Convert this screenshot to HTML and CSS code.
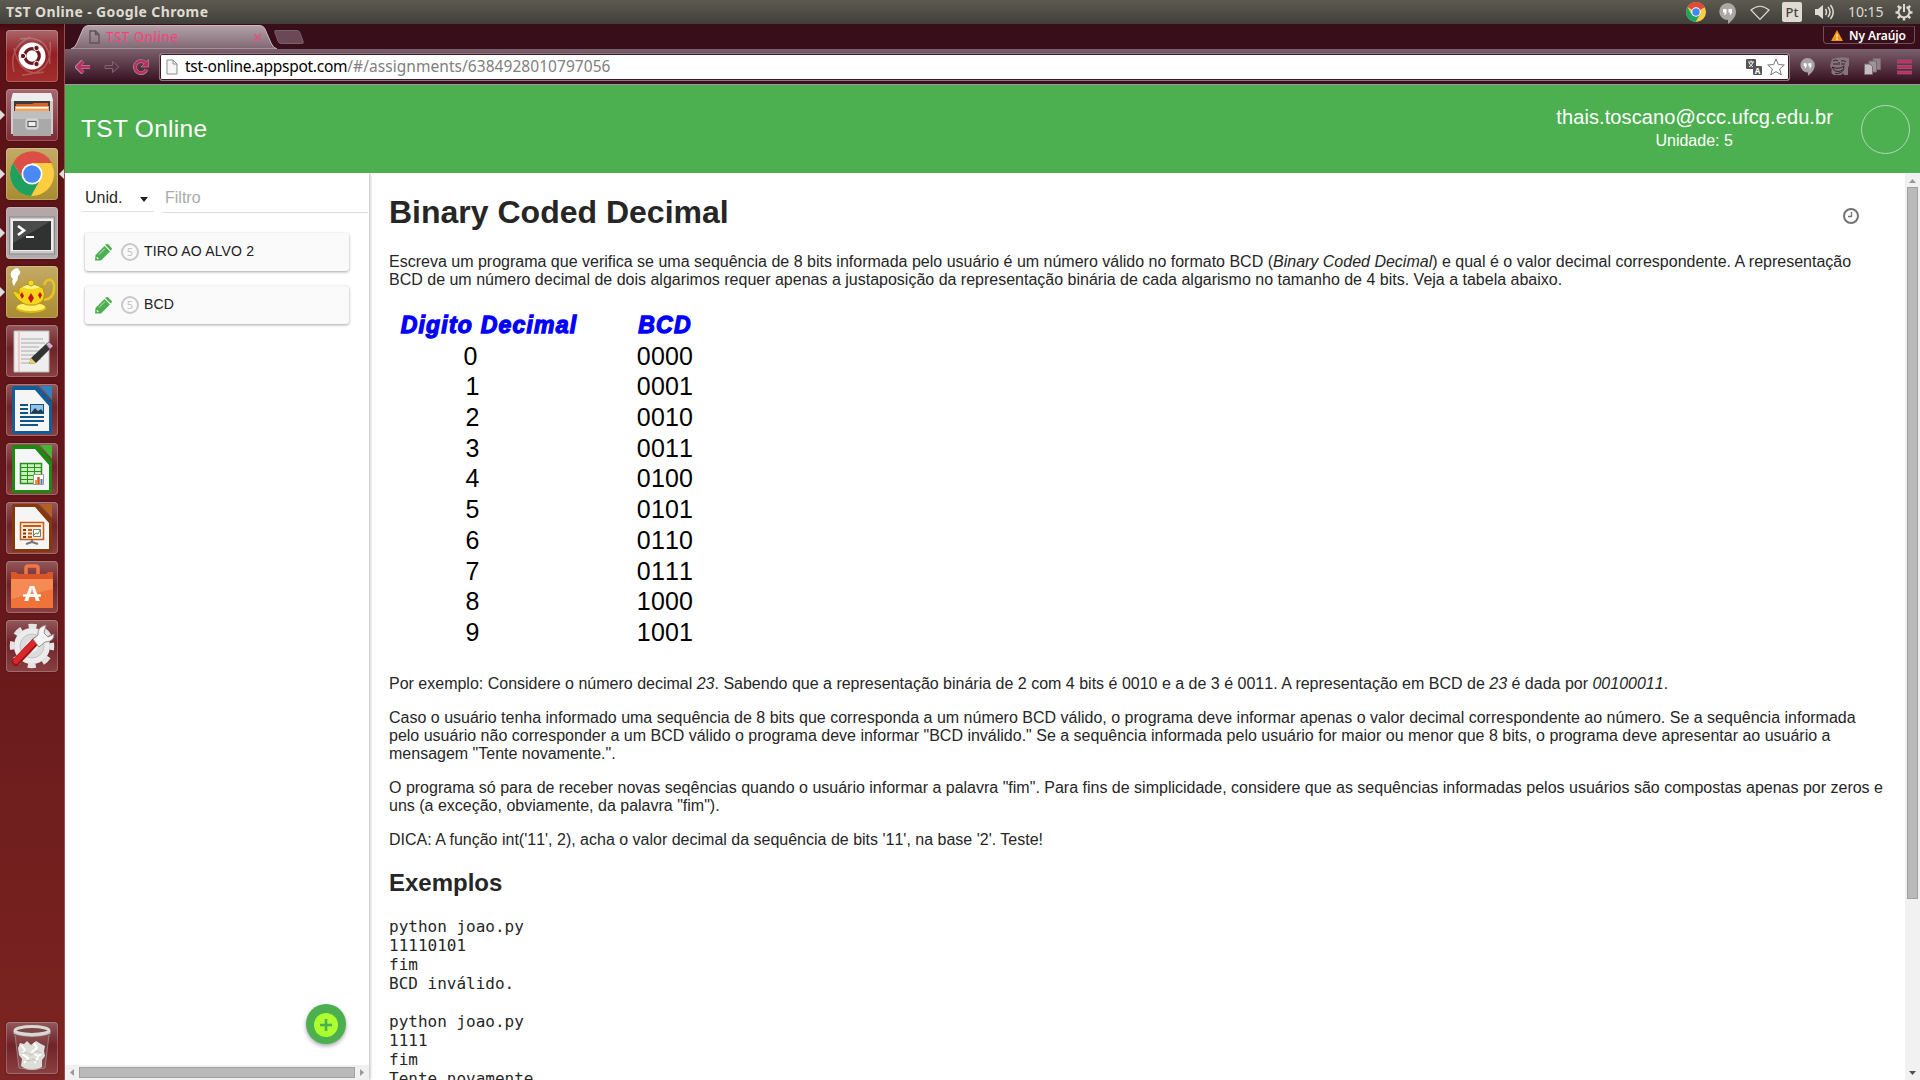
FILE: index.html
```html
<!DOCTYPE html>
<html lang="pt-BR">
<head>
<meta charset="utf-8">
<title>TST Online</title>
<link rel="stylesheet" href="styles.css">
</head>
<body>
<div class="panel">
  <span class="panel-title">TST Online - Google Chrome</span>
  <div class="indicators">
    <svg class="i-chrome" width="20" height="20" viewBox="0 0 40 40"><circle cx="20" cy="20" r="20" fill="#fc4"/><path d="M20 20 2.7 10A20 20 0 0 1 37.3 10z" fill="#de4b3c"/><path d="M20 10H37.3L20 20z" fill="#de4b3c"/><path d="M2.7 10A20 20 0 0 0 19 40L28 25 20 20 11 24z" fill="#1fa463"/><circle cx="20" cy="20" r="9.5" fill="#fff"/><circle cx="20" cy="20" r="7.5" fill="#4587f4"/></svg>
    <svg class="i-hang" width="17" height="21" viewBox="0 0 17 21"><path d="M8.500 0a8.500 8.500 0 0 1 8.500 8.500c0 6-5 10-8 12.500v-4A8.500 8.500 0 1 1 8.500 0z" fill="#aaa8a2"/><path d="M4 6h3.500v4L6 12H5l.8-2.500H4zM9.500 6H13v4l-1.500 2h-1l.8-2.500H9.500z" fill="#fff"/></svg>
    <svg class="i-wifi" width="20" height="16" viewBox="0 0 20 16"><path d="M1 5Q10-2.500 19 5L10 14.500z" fill="none" stroke="#dfdbd2" stroke-width="1.200"/></svg>
    <span class="i-lang">Pt</span>
    <svg class="i-vol" width="20" height="18" viewBox="0 0 20 18"><path d="M0 6h3l5-4v14l-5-4H0z" fill="#dfdbd2"/><path d="M10.500 6q2 3 0 6M13 4q4 5 0 10M15.500 2q5.500 7 0 14" fill="none" stroke="#dfdbd2" stroke-width="1.500"/></svg>
    <span class="i-time">10:15</span>
    <svg class="i-gear" width="18" height="18" viewBox="0 0 18 18" fill="none" stroke="#dfdbd2"><path d="M6.500 4a5.500 5.500 0 1 0 5 0" stroke-width="2"/><path d="M9 1v8" stroke-width="2"/><path d="M4.800 4.800 2.800 2.800M13.200 4.800l2-2M3 9.500H.5M15 9.500h2.500M4.800 13.200l-2 2M13.200 13.200l2 2M9 15v2.500" stroke-width="2.400"/></svg>
  </div>
</div>
<div class="desktop">
  <nav class="launcher">
    <div class="tile t-dash"><svg viewBox="0 0 52 52"><g fill="none" stroke="#fff" opacity=".22" stroke-width="1.500"><path d="M8 42Q2 18 24 7M14 9Q44 4 44 34M44 12Q48 44 16 45M8 18Q14 48 38 42"/></g><circle cx="26" cy="26" r="13.500" fill="#fff"/><circle cx="26" cy="26" r="7.300" fill="none" stroke="#6b1620" stroke-width="3.200"/><g fill="#6b1620" stroke="#fff"><circle cx="17" cy="26" r="2.700"/><circle cx="30.500" cy="18" r="2.700"/><circle cx="30.500" cy="34" r="2.700"/></g></svg></div>
    <div class="tile t-files run"><svg viewBox="0 0 52 52"><path d="M7 4h38l2 7v34H5V11z" fill="#cfcfcf"/><path d="M7 4h38l2 8H5z" fill="#ededed"/><path d="M8 12h36v10H8z" fill="#3b3b3b"/><path d="M10 15h16l2-1h14v8H10z" fill="#d9622b"/><path d="M9 17h34v5H9z" fill="#f3a35b"/><path d="M10 18h32v1.500H10z" fill="#fff"/><path d="M7 22h38v25H7z" fill="#a9a9a9"/><path d="M7 22h38v8H7z" fill="#bebebe"/><rect x="20" y="30" width="12" height="10" rx="2" fill="#c9c9c9" stroke="#ddd"/><rect x="22" y="32.500" width="8" height="5" fill="#eee" stroke="#555"/></svg></div>
    <div class="tile t-gold run focus"><svg viewBox="0 0 52 52"><circle cx="26" cy="26" r="22" fill="#ffcd40"/><path d="M26 15H46A22 22 0 0 0 7 15L17 31z" fill="#db4f47"/><path d="M7 15A22 22 0 0 0 25 48L34 32 26 35 17 31z" fill="#1fa05f"/><circle cx="26" cy="26" r="10.500" fill="#fff"/><circle cx="26" cy="26" r="8.800" fill="#4a89f3"/></svg></div>
    <div class="tile t-term run"><svg viewBox="0 0 52 52"><rect x="3.500" y="10" width="45" height="37" fill="#c9c9c9" stroke="#888"/><rect x="5" y="12" width="42" height="32" fill="#eee"/><rect x="7" y="14" width="38" height="29" fill="#303131"/><path d="M7 14h38L7 36z" fill="#4a4c4c"/><path d="m12 19 6 4.500-6 4.500" fill="none" stroke="#fff" stroke-width="2.600"/><path d="M20 30h8" stroke="#fff" stroke-width="2"/></svg></div>
    <div class="tile t-gold run"><svg viewBox="0 0 52 52"><path d="M8 20q-3-4-1-7-5-5 0-9 5-4 6 0 3 2-1 6 0 4-2 6z" fill="#fff"/><path d="M38 19q2-6 7-5 4 2 3 10-1 9-10 10" fill="none" stroke="#e9c41c" stroke-width="2.500"/><ellipse cx="25" cy="42" rx="15" ry="5" fill="#e0b90f"/><ellipse cx="25" cy="41" rx="14" ry="4" fill="#fff06a"/><path d="M13 22q12-7 24 0 5 14-8 17h-8q-9-3-15-14 5 0 7 3z" fill="#f4d51c" stroke="#bb9407"/><path d="M16 21q9-5 18 0-9 4-18 0z" fill="#fff387"/><circle cx="25" cy="17" r="3" fill="#f7dc2b" stroke="#c79d0b"/><g fill="#c3161c"><path d="m25 27 3 5-3 5-3-5zM16 26l2 4-2 3-2-4zM34 26l2 3-2 4-2-4z"/></g></svg></div>
    <div class="tile t-glass"><svg viewBox="0 0 52 52"><path d="M8 6h35v41H8z" fill="#eee" stroke="#bbb"/><path d="M13 5v42" stroke="#f2a2a2"/><path d="M15 14h22M15 18h24M15 22h18M15 26h22M15 30h14M15 34h20M15 38h10" stroke="#aaa"/><path d="m25 33 15-14 4 5-14 14-7 1z" fill="#333"/><path d="m25 33-2 6 7-1z" fill="#ead36b"/><path d="m40 19 3-2 4 4-3 3z" fill="#e6a3d5" stroke="#777"/></svg></div>
    <div class="tile t-glass"><svg viewBox="0 0 52 52"><path d="M8 2h24l14 16v30q0 2-2 2H8q-2 0-2-2V4q0-2 2-2z" fill="#135d96"/><path d="M34 2h12v14z" fill="#3083c0"/><path d="M9 6h20l14 16v25H9z" fill="#f5f5f5"/><path d="M14 21h8M14 25h8M14 29h8M14 33h24M14 37h24M14 41h18" stroke="#125687" stroke-width="1.800"/><rect x="24.500" y="20.500" width="13" height="9" fill="#8fc4e8" stroke="#125687"/><path d="m25 29 4-5 3 3 3-2 3 4z" fill="#26384a"/></svg></div>
    <div class="tile t-glass"><svg viewBox="0 0 52 52"><path d="M8 2h24l14 16v30q0 2-2 2H8q-2 0-2-2V4q0-2 2-2z" fill="#1c8a10"/><path d="M34 2h12v14z" fill="#45b534"/><path d="M9 6h20l14 16v25H9z" fill="#f5f5f5"/><path d="M14.500 20.500h21v20h-21z" fill="#c9f0bb" stroke="#2a8f1c" stroke-width="1.500"/><path d="M14.500 24.500h21M14.500 28.500h21M14.500 32.500h21M14.500 36.500h21M21.500 20.500v20M28.500 20.500v20" stroke="#2a8f1c"/><path d="M27.500 31.500h10v10h-10z" fill="#fff" stroke="#999"/><path d="M30 41v-4" stroke="#e3a02d" stroke-width="2"/><path d="M32.500 41v-7" stroke="#d9541e" stroke-width="2.500"/><path d="M35.500 41v-5" stroke="#3a83c4" stroke-width="2"/></svg></div>
    <div class="tile t-glass"><svg viewBox="0 0 52 52"><path d="M8 2h24l14 16v30q0 2-2 2H8q-2 0-2-2V4q0-2 2-2z" fill="#85380c"/><path d="M34 2h12v14z" fill="#b56024"/><path d="M9 5h20l14 16v26H9z" fill="#f5f5f5"/><rect x="14.500" y="20.500" width="23" height="17" fill="#fdebdd" stroke="#c65b17" stroke-width="1.500"/><path d="M17 24h18M22 28h4M22 31.500h4M22 35h4" stroke="#c65b17" stroke-width="2"/><path d="M17 28h3M17 31.500h3M17 35h3" stroke="#85380c" stroke-width="2"/><path d="M27.500 27.500h7v7h-7z" fill="#fff" stroke="#777"/><path d="m28 33 2-2 2 1 2-4" stroke="#3aa32a" fill="none"/><path d="M26 38v2l-6 2m6-2 6 2" stroke="#777" stroke-width="2" fill="none"/></svg></div>
    <div class="tile t-glass"><svg viewBox="0 0 52 52"><path d="M20 17V7q0-2 2-2h8q2 0 2 2v10" fill="none" stroke="#f07746" stroke-width="3.500"/><path d="M5 11h5l2 2h28l2-2h5v7H5z" fill="#d9562a"/><path d="M5 18h42v29H5z" fill="#f0743a"/><path d="M5 18h42v10L5 38z" fill="#f58a54"/><text x="26" y="40" text-anchor="middle" class="bag-letter">A</text><path d="M17 34.500h18" stroke="#fff" stroke-width="2.500"/></svg></div>
    <div class="tile t-glass"><svg viewBox="0 0 52 52"><circle cx="26" cy="26" r="20" fill="none" stroke="#e4e4e4" stroke-width="4.500" stroke-dasharray="8.200 7.508" stroke-dashoffset="4.100"/><circle cx="26" cy="26" r="18" fill="#ececec"/><circle cx="26" cy="26" r="12" fill="#dcdcdc" stroke="#c4c4c4"/><circle cx="26" cy="26" r="6" fill="#f4f4f4"/><path d="M10 42 30 21" stroke="#9e1214" stroke-width="8" stroke-linecap="round"/><path d="M10 41 29 21" stroke="#d9282b" stroke-width="5.500" stroke-linecap="round"/><path d="m27 19 5-4q-1-8 8-10l-2 8 4 4 6-3q0 8-9 8l-6 5z" fill="#f4f4f4" stroke="#8f8f8f"/></svg></div>
    <div class="tile t-glass t-trash"><svg viewBox="0 0 52 52"><path d="m9 13 4 33q13 4 26 0l4-33z" fill="#fff" opacity=".1"/><path d="m12 26 2-5 4 1 3-3 4 4 5-4 5 3 4 2-1 5 1 5-3 4v7l-4 2q-6 2-12 0l-5-3 1-7-3-4z" fill="#deded8"/><path d="m15 23 4 5-3 4 6 4-4 5m10-20 3 5-5 4 6 4 5-3m-5 4-3 6" fill="none" stroke="#fff" stroke-width="2"/><path d="m15 32 5-2 5 3 6-4 6 3M19 38l5 1 3-2 5 3" fill="none" stroke="#c2c1ba"/><path d="M9 13 13 46q13 3 26 0L43 13" fill="none" stroke="#aaa" stroke-width=".6"/><path d="M7.500 9v3q18.500 6 37 0V9" fill="#b2b2ae"/><ellipse cx="26" cy="8.500" rx="17" ry="4" fill="#7c4546" stroke="#d8d8d5" stroke-width="3"/></svg></div>
  </nav>
  <div class="window">
    <div class="tabstrip">
      <div class="tab">
        <svg class="tab-shape" width="206" height="24" viewBox="0 0 206 24"><defs><linearGradient id="tg" x1="0" y1="0" x2="0" y2="1"><stop offset="0" stop-color="#b3a1a8"/><stop offset="1" stop-color="#806872"/></linearGradient></defs><path d="M0 24q4-1 6-6L12 4q1-3 5-3.500H189q4 .5 5 3.500l6 14q2 5 6 6z" fill="url(#tg)" stroke="#c9b8bf"/></svg>
        <svg class="tab-doc" width="11" height="14" viewBox="0 0 11 14"><path d="M1 1h5.500L10 4.500V13H1zM6.500 1v3.500H10" fill="none" stroke="#5e5358" stroke-width="1.400"/></svg>
        <span class="tab-title">TST Online</span>
        <svg class="tab-close" width="9" height="9" viewBox="0 0 9 9"><path d="m1 1 7 7m0-7L1 8" stroke="#e0507f" stroke-width="1.500"/></svg>
      </div>
      <div class="newtab"></div>
      <div class="profile"><svg width="12" height="11" viewBox="0 0 12 11"><path d="m6 0 6 11H0z" fill="#f6960d"/><path d="M6 4v3.500M6 8.500V10" stroke="#fff" stroke-width="1.200"/></svg><span>Ny Araújo</span></div>
    </div>
    <div class="toolbar">
      <svg class="nav-i" width="16" height="14" viewBox="0 0 16 14"><path d="M8 1 2 7l6 6M2.500 7H15" fill="none" stroke="#a98f9a" stroke-width="4.200"/><path d="M8 1.500 2.500 7 8 12.500M3 7h12" fill="none" stroke="#bd2c62" stroke-width="2.600"/></svg>
      <svg class="nav-i" width="16" height="14" viewBox="0 0 16 14"><path d="M1 5.500h7.500V1.500L15 7l-6.500 5.500v-4H1z" fill="#5a3546" stroke="#846372"/></svg>
      <svg class="nav-i" width="16" height="16" viewBox="0 0 16 16"><path d="M13.500 10.500A6 6 0 1 1 12 3.700" fill="none" stroke="#a98f9a" stroke-width="3.800"/><path d="M15.500.5v7.500H8z" fill="#bd2c62" stroke="#a98f9a" stroke-width=".7"/><path d="M13.500 10.500A6 6 0 1 1 12.500 4" fill="none" stroke="#bd2c62" stroke-width="2.500"/></svg>
      <div class="omnibox">
        <svg width="12" height="16" viewBox="0 0 12 16"><path d="M1 1h6l4 4v10H1zM7 1v4h4" fill="#f6f6f6" stroke="#8c8c8c"/></svg>
        <span class="url"><span class="host">tst-online.appspot.com</span><span class="path">/#/assignments/6384928010797056</span></span>
        <svg class="tr" width="16" height="16" viewBox="0 0 16 16"><rect width="10" height="10" rx="1" fill="#555"/><path d="M2 3h6M5 1.500V3M3 8q3-1 4-5M3 3.500q1 3 4 4.500" fill="none" stroke="#fff" stroke-width=".9"/><rect x="7" y="7" width="9" height="9" rx="1" fill="#555"/><text x="11.500" y="14.500" text-anchor="middle" class="tr-letter">A</text></svg>
        <svg class="star" width="18" height="18" viewBox="0 0 18 18"><path d="m9 1 2.300 5.500 6 .5-4.600 3.900 1.500 6L9 13.600 3.800 16.900l1.500-6L.7 7l6-.5z" fill="#fff" stroke="#777"/></svg>
      </div>
      <div class="exts">
        <svg width="15" height="18" viewBox="0 0 17 21"><path d="M8.500 0a8.500 8.500 0 0 1 8.500 8.500c0 6-5 10-8 12.500v-4A8.500 8.500 0 1 1 8.500 0z" fill="#aaa3a6"/><path d="M4 6h3.500v4L6 12H5l.8-2.500H4zM9.500 6H13v4l-1.500 2h-1l.8-2.500H9.500z" fill="#fff"/></svg>
        <svg width="19" height="19" viewBox="0 0 19 19"><path d="M2 2q8-3 17-1v8l-1 1v8h-4l-1-2-2 2H4q-4-2-2-5L0 9z" fill="#85747b"/><path d="M3 4q3-2 5 0m3 0q3-1 5 1M3 7h5M11 7h4M2 10q7 3 12-1 0 5-6 5.500-4 .5-6-4.500zM5 16.500q6 .5 9-4M9 5v3" fill="none" stroke="#3a1e28" stroke-width="1"/></svg>
        <svg width="17" height="17" viewBox="0 0 17 17" stroke="#776970"><path d="M9 .5h7.500v11H9z" fill="#8e8287"/><path d="M5 3h7.500v11H5z" fill="#9d9397"/><path d="M.5 6H6l2.500 2.500v8h-8z" fill="#c5bec1"/></svg>
        <svg width="15" height="16" viewBox="0 0 15 16"><path d="M0 2.500h15M0 8h15M0 13.500h15" stroke="#927683" stroke-width="3.600"/><path d="M0 2.500h15M0 8h15M0 13.500h15" stroke="#c42a63" stroke-width="2.400"/></svg>
      </div>
    </div>
    <header class="appbar">
      <span class="brand">TST Online</span>
      <div class="user"><span class="email">thais.toscano@ccc.ufcg.edu.br</span><span class="unit">Unidade: 5</span></div>
      <div class="avatar"></div>
    </header>
    <div class="content">
      <aside class="side">
        <div class="filters">
          <div class="select"><span>Unid.</span><i class="caret"></i></div>
          <div class="filter">Filtro</div>
        </div>
        <div class="cards">
          <div class="card"><svg width="17" height="17" viewBox="0 0 17 17"><path d="M0 16.500 .5 11 9.500 2l5.500 5.500L6 16.500z" fill="#4caf50"/><path d="m10.300 1.200 1-1q.8-.5 1.600 0L16.700 4q.5.800 0 1.500l-1 1z" fill="#4caf50"/><path d="M4 10.500 9.800 4.700" stroke="#fff" stroke-width=".7"/><path d="M1.800 13.400 3.300 14.900" stroke="#fff" stroke-width="1.300"/></svg><span class="badge">5</span><span class="name">TIRO AO ALVO 2</span></div>
          <div class="card"><svg width="17" height="17" viewBox="0 0 17 17"><path d="M0 16.500 .5 11 9.500 2l5.500 5.500L6 16.500z" fill="#4caf50"/><path d="m10.300 1.200 1-1q.8-.5 1.600 0L16.700 4q.5.800 0 1.500l-1 1z" fill="#4caf50"/><path d="M4 10.500 9.800 4.700" stroke="#fff" stroke-width=".7"/><path d="M1.800 13.400 3.300 14.900" stroke="#fff" stroke-width="1.300"/></svg><span class="badge">5</span><span class="name">BCD</span></div>
        </div>
        <div class="hbar"><svg width="14" height="15"><path d="M9 4v7L5 7.500z" fill="#999"/></svg><div class="hthumb"></div><svg width="14" height="15"><path d="M5 4v7l4-3.500z" fill="#999"/></svg></div>
        <div class="fab"><svg width="24" height="24" viewBox="0 0 24 24"><circle cx="12" cy="12" r="12" fill="#adff2f"/><path d="M12 6v12M6 12h12" stroke="#4caf50" stroke-width="2.600"/></svg></div>
      </aside>
      <main class="main">
        <div class="head"><h1>Binary Coded Decimal</h1><svg width="16" height="16" viewBox="0 0 16 16"><circle cx="8" cy="8" r="7" fill="none" stroke="#737373" stroke-width="2"/><path d="M8.500 4v4.500H5" fill="none" stroke="#737373" stroke-width="1.300"/></svg></div>
        <p>Escreva um programa que verifica se uma sequência de 8 bits informada pelo usuário é um número válido no formato BCD (<em>Binary Coded Decimal</em>) e qual é o valor decimal correspondente. A representação<br>BCD de um número decimal de dois algarimos requer apenas a justaposição da representação binária de cada algarismo no tamanho de 4 bits. Veja a tabela abaixo.</p>
        <div class="bcd">
          <b>Digito Decimal</b><b>BCD</b>
          <span class="zero">0</span><span>0000</span>
          <span>1</span><span>0001</span>
          <span>2</span><span>0010</span>
          <span>3</span><span>0011</span>
          <span>4</span><span>0100</span>
          <span>5</span><span>0101</span>
          <span>6</span><span>0110</span>
          <span>7</span><span>0111</span>
          <span>8</span><span>1000</span>
          <span>9</span><span>1001</span>
        </div>
        <p>Por exemplo: Considere o número decimal <em>23</em>. Sabendo que a representação binária de 2 com 4 bits é 0010 e a de 3 é <span class="bits">0011</span>. A representação em BCD de <em>23</em> é dada por <em class="bits">00100011</em>.</p>
        <p>Caso o usuário tenha informado uma sequência de 8 bits que corresponda a um número BCD válido, o programa deve informar apenas o valor decimal correspondente ao número. Se a sequência informada<br>pelo usuário não corresponder a um BCD válido o programa deve informar "BCD inválido." Se a sequência informada pelo usuário for maior ou menor que 8 bits, o programa deve apresentar ao usuário a<br>mensagem "Tente novamente.".</p>
        <p>O programa só para de receber novas seqências quando o usuário informar a palavra "fim". Para fins de simplicidade, considere que as sequências informadas pelos usuários são compostas apenas por zeros e<br>uns (a exceção, obviamente, da palavra "fim").</p>
        <p>DICA: A função int('<span class="bits">11</span>', 2), acha o valor decimal da sequência de bits '<span class="bits">11</span>', na base '2'. Teste!</p>
        <h2>Exemplos</h2>
        <pre>python joao.py
11110101
fim
BCD inválido.

python joao.py
1111
fim
Tente novamente.</pre>
      </main>
      <div class="vbar"><svg width="15" height="14"><path d="M4 10h7L7.500 6z" fill="#999"/></svg><div class="vthumb"></div><svg class="down" width="15" height="14"><path d="M4 5h7L7.500 9z" fill="#505050"/></svg></div>
    </div>
  </div>
</div>
</body>
</html>
```
FILE: styles.css
```css
* { box-sizing: border-box; }
body { margin: 0; width: 1920px; height: 1080px; overflow: hidden; display: flex; flex-direction: column; font: 16px "Liberation Sans", Arial, sans-serif; color: #262626; background: #fff; }
svg { display: block; flex: none; }

.panel { height: 24px; flex: none; display: flex; justify-content: space-between; align-items: center; padding: 0 7px 0 6px; background: linear-gradient(#5d5a50, #403f3a); color: #dfdbd2; font-family: "Noto Sans", sans-serif; }
.panel-title { font-size: 14px; font-weight: 700; line-height: 24px; letter-spacing: .37px; }
.indicators { display: flex; align-items: center; height: 24px; }
.i-chrome { margin-right: 13px; }
.i-hang { margin: 2px 14px 0 0; }
.i-wifi { margin: 1px 12px 0 0; }
.i-lang { width: 20px; height: 20px; margin-right: 13px; border-radius: 2px; background: #dfdbd2; color: #45433e; font-size: 13px; font-weight: 500; line-height: 20px; text-align: center; }
.i-vol { margin-right: 13px; }
.i-time { width: 36px; margin-right: 11px; font-size: 14px; line-height: 24px; white-space: nowrap; letter-spacing: -.1px; }

.desktop { flex: 1; min-height: 0; display: flex; }
.launcher { width: 65px; flex: none; display: flex; flex-direction: column; gap: 7px; padding: 6px 0 6px 6px; background: linear-gradient(#42090e 0, #5a1217 8px, #64171a 50%, #7d2522); border-right: 1px solid #925050; }
.tile { position: relative; width: 52px; height: 52px; flex: none; border-radius: 4px; box-shadow: inset 0 0 0 1px rgba(255,255,255,.22), 0 0 2px rgba(0,0,0,.4); }
.tile svg { width: 52px; height: 52px; }
.t-dash { background: linear-gradient(#a8686d, #941f22 45%, #a22f2f); }
.t-files { background: linear-gradient(#a5686e, #7d2a35); }
.t-gold { background: linear-gradient(#c4ab66, #a88c30); }
.t-term { background: linear-gradient(#b5a5a7, #b5abad); }
.t-glass { background: linear-gradient(#93585b, #6f2328 45%, #8a4143); }
.t-trash { margin-top: auto; }
.run::before { content: ""; position: absolute; left: -6px; top: 21px; border: 5px solid transparent; border-left-color: #ddd; border-right: 0; }
.focus::after { content: ""; position: absolute; right: -6px; top: 21px; border: 5px solid transparent; border-right-color: #ddd; border-left: 0; }
.bag-letter { font: 700 22px "Noto Sans", sans-serif; fill: #fff; }

.window { flex: 1; min-width: 0; display: flex; flex-direction: column; }
.tabstrip { height: 25px; flex: none; display: flex; align-items: flex-start; padding: 1px 5px 0 6px; background: #390e1b; font-family: "Noto Sans", sans-serif; }
.tab { position: relative; width: 206px; height: 24px; display: flex; align-items: center; padding: 0 15px 0 18px; }
.tab-shape { position: absolute; left: 0; top: 0; }
.tab-doc, .tab-title, .tab-close { position: relative; }
.tab-title { margin-left: 6px; font-size: 13.500px; line-height: 24px; color: #ff3d7c; letter-spacing: .45px; }
.tab-close { margin-left: auto; }
.newtab { width: 26px; height: 14px; margin: 5px 0 0 -1px; border: 1px solid #7b5f6b; border-radius: 3px; background: #6a4856; transform: skewX(20deg); }
.profile { width: 92px; height: 18px; margin: 1px 0 0 auto; display: flex; align-items: center; gap: 6px; padding-left: 7px; border: 1px solid #704f5c; border-top-color: #50303c; border-radius: 0 0 4px 4px; color: #fff; font-size: 12px; font-weight: 600; white-space: nowrap; letter-spacing: -.1px; }
.toolbar { height: 36px; flex: none; display: flex; align-items: center; padding: 0 8px 0 10px; background: linear-gradient(#7b606c, #391220 92%); border-bottom: 1px solid #a891a0; }
.nav-i { width: 16px; margin-right: 13px; }
.omnibox { flex: 1; height: 28px; display: flex; align-items: center; margin-left: -3px; padding: 0 4px 0 6px; background: #fff; border: 1px solid #8f7881; border-radius: 3px; box-shadow: inset 0 0 0 1px #3b1a28; }
.url { margin: -2px 0 0 7px; font: 15.500px/24px "Noto Sans", sans-serif; white-space: nowrap; }
.host { color: #000; letter-spacing: -.27px; }
.path { color: #808080; letter-spacing: .05px; }
.tr { margin-left: auto; }
.tr-letter { font: 700 8px "Noto Sans", sans-serif; fill: #fff; }
.star { margin-left: 5px; }
.exts { display: flex; align-items: center; margin-left: 10px; gap: 15px; }
.exts svg:last-child { margin-left: 1px; }

.appbar { height: 88px; flex: none; display: flex; align-items: center; padding: 0 10px 0 16px; background: #4caf50; color: #fff; }
.brand { font-size: 24.500px; letter-spacing: .3px; }
.user { margin: -2px 0 0 auto; display: flex; flex-direction: column; align-items: center; }
.email { font-size: 20px; line-height: 23px; letter-spacing: .1px; }
.unit { line-height: 18px; margin: 3px 1px 0 0; }
.avatar { width: 49px; height: 49px; margin-left: 28px; border: 1px solid #b7d8b9; border-radius: 50%; }

.content { flex: 1; min-height: 0; display: flex; }
.side { position: relative; width: 304px; flex: none; display: flex; flex-direction: column; box-shadow: 1px 0 3px rgba(0,0,0,.3); clip-path: inset(0 -5px 0 0); }
.filters { display: flex; align-items: flex-start; gap: 9px; padding: 12px 1px 0 17px; }
.select { width: 72px; height: 27px; display: flex; align-items: center; justify-content: space-between; padding: 0 6px 1px 3px; border-bottom: 1px solid #e0e0e0; }
.caret { border: 4.500px solid transparent; border-top: 5px solid #222; border-bottom: 0; margin-top: 4px; }
.filter { flex: 1; height: 28px; padding: 4px 2px 0; color: #aaa; border-bottom: 1px solid #dcdcdc; }
.cards { display: flex; flex-direction: column; gap: 15px; padding: 20px 20px 0 20px; }
.card { height: 38px; display: flex; align-items: center; padding-left: 10px; border-radius: 3px; background: #fafafa; box-shadow: 0 1px 3px rgba(0,0,0,.36); font-size: 14px; letter-spacing: .16px; color: #212121; }
.name { margin-top: -2px; }
.badge { width: 18px; height: 18px; margin: 0 5px 0 9px; border: 2.500px solid #c8c8c8; border-radius: 50%; color: #c4c4c4; font: 11px/14px "Noto Sans", sans-serif; text-align: center; letter-spacing: 0; }
.hbar { height: 15px; margin-top: auto; display: flex; background: #f1f1f1; }
.hthumb { flex: 1; height: 11px; margin-top: 2px; background: #bababa; border: 1px solid #a0a0a0; }
.fab { position: absolute; right: 23px; bottom: 36px; width: 40px; height: 40px; display: grid; place-items: center; padding-top: 1px; border-radius: 50%; background: #4caf50; box-shadow: 0 2px 4px rgba(0,0,0,.35); }

.main { flex: 1; min-width: 0; overflow: hidden; padding-left: 20px; white-space: nowrap; }
.head { display: flex; align-items: flex-start; justify-content: space-between; padding: 21px 46px 0 0; }
.head svg { margin-top: 14px; }
h1 { margin: 0; font-size: 32px; line-height: 37px; }
p { margin: 0 0 16px; line-height: 18px; }
.head + p { margin-top: 22px; }
.bits { font-kerning: none; }
.bcd { height: 354px; display: grid; grid-template-columns: 200px 152px; grid-auto-rows: 30.700px; align-content: start; padding-top: 4px; margin-bottom: 16px; text-align: center; color: #000; font-kerning: none; }
.bcd b { font-size: 23px; font-style: italic; line-height: 33px; color: #00f; letter-spacing: 1.200px; -webkit-text-stroke: 1.300px #00f; }
.bcd span { font-size: 25px; line-height: 32px; letter-spacing: .2px; }
.bcd span:nth-child(odd) { padding-right: 33px; }
.bcd .zero:nth-child(odd) { padding-right: 37px; }
h2 { margin: 20px 0; font-size: 24px; line-height: 28px; }
pre { margin: 0; font: 16px/19px "DejaVu Sans Mono", monospace; }

.vbar { width: 15px; flex: none; display: flex; flex-direction: column; background: #f1f1f1; }
.vthumb { width: 11px; height: 712px; margin-left: 2px; background: #bababa; border: 1px solid #a0a0a0; }
.down { margin-top: auto; }
```
